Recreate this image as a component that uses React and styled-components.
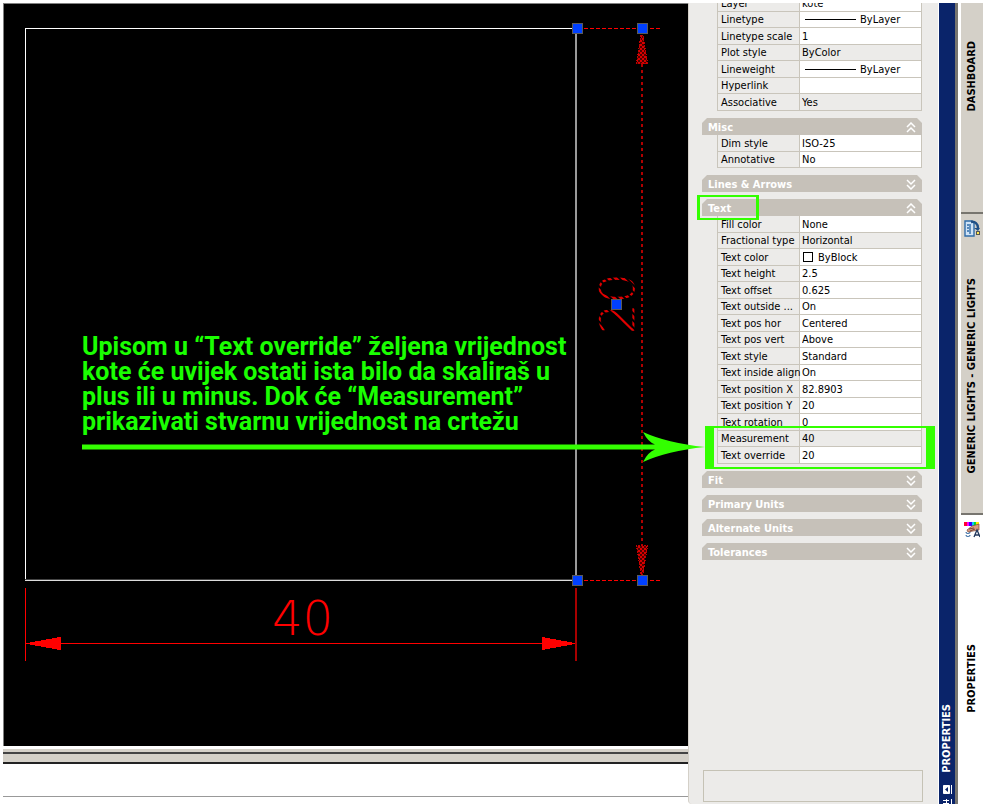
import React, { useState } from 'react';
import styled, { createGlobalStyle } from 'styled-components';

const GlobalStyle = createGlobalStyle`
  * {
    box-sizing: border-box;
  }
  body {
    margin: 0;
    background: #fff;
    color: #000;
    font-family: "DejaVu Sans Condensed", "DejaVu Sans", sans-serif;
    font-size: 11px;
  }
`;

const general = [
  { name: 'Layer', value: 'kote' },
  { name: 'Linetype', value: 'ByLayer', mark: 'line' },
  { name: 'Linetype scale', value: '1' },
  { name: 'Plot style', value: 'ByColor', locked: true },
  { name: 'Lineweight', value: 'ByLayer', mark: 'line' },
  { name: 'Hyperlink', value: '' },
  { name: 'Associative', value: 'Yes', locked: true },
];

const misc = [
  { name: 'Dim style', value: 'ISO-25' },
  { name: 'Annotative', value: 'No' },
];

const text = [
  { name: 'Fill color', value: 'None' },
  { name: 'Fractional type', value: 'Horizontal', locked: true },
  { name: 'Text color', value: 'ByBlock', mark: 'swatch' },
  { name: 'Text height', value: '2.5' },
  { name: 'Text offset', value: '0.625' },
  { name: 'Text outside ...', value: 'On' },
  { name: 'Text pos hor', value: 'Centered' },
  { name: 'Text pos vert', value: 'Above' },
  { name: 'Text style', value: 'Standard' },
  { name: 'Text inside align', value: 'On' },
  { name: 'Text position X', value: '82.8903' },
  { name: 'Text position Y', value: '20' },
  { name: 'Text rotation', value: '0' },
  { name: 'Measurement', value: '40', locked: true },
  { name: 'Text override', value: '20' },
];

const Page = styled.div`
  display: flex;
  min-height: 100vh;
  padding: 3px 1px 3px 3px;
`;

const Workspace = styled.main`
  position: relative;
  z-index: 1;
  flex: 1;
  min-width: 0;
  display: flex;
  flex-direction: column;
`;

const Canvas = styled.div`
  flex: 1;
  min-height: 0;
  overflow: hidden;
  background: #000;
  border-top: 1px solid #808080;
  border-left: 1px solid #808080;
  svg {
    display: block;
  }
`;

const Splitter = styled.div`
  height: 18px;
  background: #d4d0c8;
  border-top: 3px solid #fff;
  border-bottom: 2px solid #222;
  padding-top: 3px;
  &::before {
    content: "";
    display: block;
    height: 2px;
    background: #444;
  }
`;

const CommandLine = styled.div`
  height: 40px;
  background: #fff;
  &::before {
    content: "";
    display: block;
    height: 32px;
    border-bottom: 1px solid #999;
  }
`;

const Note = styled.p`
  position: absolute;
  left: 79px;
  top: 331px;
  margin: 0;
  color: #1aff00;
  font-family: Roboto, "Liberation Sans", sans-serif;
  font-size: 25px;
  font-weight: bold;
  line-height: 25px;
  white-space: nowrap;
`;

const NoteArrow = styled.svg`
  position: absolute;
  left: 79px;
  top: 428px;
  pointer-events: none;
`;

const Panel = styled.aside`
  width: 250px;
  display: flex;
  flex-direction: column;
  justify-content: space-between;
  overflow: hidden;
  padding: 0 16px 2px 13px;
  background: #ecebe9;
  border-left: 1px solid #d4d0c8;
  border-bottom-left-radius: 4px;
`;

const Sections = styled.div`
  display: flex;
  flex-direction: column;
  gap: 7px;
  margin-top: -8px;
`;

const SectionBox = styled.section`
  position: relative;
`;

const SectionHead = styled.button`
  display: flex;
  align-items: center;
  justify-content: space-between;
  width: 100%;
  height: 17px;
  padding: 2px 6px 0;
  border: 0;
  background: #c6c1b9;
  clip-path: polygon(0 5px, 5px 0, calc(100% - 5px) 0, 100% 5px, 100% 100%, 0 100%);
  color: #fff;
  font: inherit;
  font-weight: bold;
`;

const Grid = styled.table`
  width: calc(100% - 15px);
  margin-left: 15px;
  table-layout: fixed;
  border-spacing: 0;
  border-left: 1px solid #c9c5bb;
  tr:nth-child(odd) {
    height: 17px;
  }
  tr:nth-child(even) {
    height: 16px;
  }
`;

const NameCell = styled.th`
  width: 82px;
  padding: 0 0 0 3px;
  border-right: 1px solid #c9c5bb;
  border-bottom: 1px solid #c9c5bb;
  font-weight: normal;
  line-height: 15px;
  text-align: left;
  white-space: nowrap;
`;

const ValueCell = styled.td`
  padding: 0 0 0 2px;
  border-right: 1px solid #c9c5bb;
  border-bottom: 1px solid #c9c5bb;
  background: ${(props) => (props.$locked ? '#ecebe9' : '#fff')};
`;

const ValueBox = styled.div`
  display: flex;
  align-items: center;
  height: 15px;
`;

const ValueInput = styled.input`
  flex: 1;
  min-width: 0;
  height: 15px;
  padding: 0;
  border: 0;
  background: transparent;
  font: inherit;
  outline: 0;
`;

const LineMark = styled.span`
  width: 51px;
  height: 1px;
  margin: 0 4px 0 3px;
  background: #000;
`;

const Swatch = styled.span`
  width: 10px;
  height: 10px;
  margin: 0 5px 0 1px;
  border: 1px solid #000;
  background: #fff;
`;

const Highlight = styled.span`
  position: absolute;
  border: 2px solid #33ff00;
  pointer-events: none;
`;

const HeadHighlight = styled(Highlight)`
  left: -5px;
  top: -4px;
  width: 62px;
  height: 25px;
  border-left-width: 3px;
  border-right-width: 3px;
`;

const RowsHighlight = styled(Highlight)`
  left: 3px;
  right: -13px;
  bottom: -5px;
  height: 43px;
  border-left-width: 9px;
  border-right-width: 9px;
`;

const Description = styled.div`
  height: 32px;
  margin-left: 1px;
  margin-right: -1px;
  border: 1px solid #c5c2b5;
`;

const TitleBar = styled.div`
  width: 17px;
  display: flex;
  flex-direction: column;
  align-items: center;
  justify-content: flex-end;
  gap: 12px;
  background: #0a246a;
  border-left: 1px solid #fff;
  color: #fff;
`;

const SideText = styled.span`
  writing-mode: vertical-rl;
  transform: rotate(180deg);
  font-weight: bold;
  line-height: 14px;
  white-space: nowrap;
`;

const Divider = styled.div`
  width: 6px;
  background: #fff;
  border-left: 3px solid #77756f;
`;

const Dock = styled.nav`
  width: 22px;
  display: flex;
  flex-direction: column;
`;

const DockTab = styled.button`
  height: ${(props) => props.$height};
  flex: ${(props) => (props.$active ? '1' : 'none')};
  display: flex;
  flex-direction: column;
  align-items: center;
  justify-content: flex-start;
  padding: ${(props) => props.$pad}px 0 0;
  gap: ${(props) => props.$gap}px;
  border: 0;
  border-top: ${(props) => (props.$first ? '0' : '2px solid #77756f')};
  background: ${(props) => (props.$active ? '#fff' : '#d4d0c8')};
  color: #000;
  font: inherit;
`;

function Chevrons({ open }) {
  return (
    <svg width="10" height="11" viewBox="0 0 10 11" fill="none" stroke="#fff" strokeWidth="1.5">
      {open ? (
        <path d="M1 5 L5 1 L9 5 M1 10 L5 6 L9 10" />
      ) : (
        <path d="M1 1 L5 5 L9 1 M1 6 L5 10 L9 6" />
      )}
    </svg>
  );
}

function PropertyGrid({ rows }) {
  const [values, setValues] = useState(rows.map((row) => row.value));

  const change = (index, value) => {
    setValues(values.map((old, i) => (i === index ? value : old)));
  };

  return (
    <Grid>
      <tbody>
        {rows.map((row, index) => {
          const id = row.name.toLowerCase().replace(/[^a-z]+/g, '-');
          return (
            <tr key={row.name}>
              <NameCell scope="row">
                <label htmlFor={id}>{row.name}</label>
              </NameCell>
              <ValueCell $locked={row.locked}>
                <ValueBox>
                  {row.mark === 'line' && <LineMark />}
                  {row.mark === 'swatch' && <Swatch />}
                  <ValueInput
                    id={id}
                    value={values[index]}
                    readOnly={row.locked}
                    onChange={(e) => change(index, e.target.value)}
                  />
                </ValueBox>
              </ValueCell>
            </tr>
          );
        })}
      </tbody>
    </Grid>
  );
}

function Section({ title, rows, children }) {
  const [open, setOpen] = useState(Boolean(rows));

  return (
    <SectionBox>
      <SectionHead type="button" aria-expanded={open} onClick={() => setOpen(!open)}>
        {title}
        <Chevrons open={open} />
      </SectionHead>
      {open && rows && <PropertyGrid rows={rows} />}
      {children}
    </SectionBox>
  );
}

function Grip({ x, y }) {
  return <rect x={x - 4.5} y={y - 4.5} width="10" height="10" fill="#0040ff" stroke="#5a5a5a" />;
}

function Drawing() {
  return (
    <svg width="684" height="742" viewBox="4 4 684 742" shapeRendering="crispEdges">
      <defs>
        <pattern id="hatch" width="4" height="4" patternUnits="userSpaceOnUse">
          <rect width="4" height="4" fill="#500000" />
          <rect width="2" height="2" fill="#d80000" />
          <rect x="2" y="2" width="2" height="2" fill="#d80000" />
        </pattern>
        <pattern id="dashes" width="5" height="5" patternUnits="userSpaceOnUse" patternTransform="rotate(45)">
          <rect width="3" height="5" fill="#e00000" />
        </pattern>
      </defs>
      {/* square */}
      <path d="M576 28.5 H25.5 V580" fill="none" stroke="#fff" />
      <path d="M25 580.5 H577" stroke="#ddd" />
      <path d="M25 579.5 H577" stroke="#444" />
      <path d="M576 28 V580" stroke="#999" strokeWidth="2" />

      {/* selected vertical dimension */}
      <g stroke="#f00" fill="none">
        <path d="M584 28.5 H660 M584 580.5 H660" strokeDasharray="4 2" />
        <path d="M642 64 V545" stroke="#b00000" strokeWidth="2" strokeDasharray="3 3" />
        <path d="M641 35 L636.5 63.5 H647.5 L643 35 Z" fill="url(#hatch)" stroke="#c00000" strokeDasharray="2 1" />
        <path d="M641 574 L636.5 545.5 H647.5 L643 574 Z" fill="url(#hatch)" stroke="#c00000" strokeDasharray="2 1" />
      </g>
      <text
        transform="translate(634 334) rotate(-90)"
        fontFamily="DejaVu Sans"
        fontWeight="200"
        fontSize="48"
        fill="url(#dashes)"
      >
        20
      </text>

      {/* horizontal dimension */}
      <g stroke="#f00" fill="#f00">
        <path d="M25.5 588 V661 M26 643.5 H576" />
        <path d="M576 588 V661" stroke="#a80000" strokeWidth="2" />
        <path d="M27 643.5 L60 637.5 V649.5 Z" />
        <path d="M575 643.5 L542 637.5 V649.5 Z" />
      </g>
      <text x="272" y="635" fontFamily="DejaVu Sans" fontWeight="200" fontSize="48" fill="#f00">
        40
      </text>

      <Grip x={577} y={28} />
      <Grip x={642} y={28} />
      <Grip x={577} y={580} />
      <Grip x={642} y={580} />
      <Grip x={616} y={304} />
    </svg>
  );
}

function CopyIcon() {
  return (
    <svg width="16" height="17" viewBox="0 0 16 17">
      <path d="M1 1 H8 L10 3 V16 H1 Z" fill="#cfe3f7" stroke="#2f6ca8" strokeWidth="1.4" />
      <path d="M3 5 H5 M3 8 H5 M3 11 H5 M6 4 V14" stroke="#2f6ca8" strokeWidth="1.4" />
      <path d="M7 2 C11 1 14 4 14 8" fill="none" stroke="#1f4f86" strokeWidth="2.4" />
      <path d="M10 8 H16 L14 11 Z" fill="#1f4f86" />
      <rect x="12.5" y="11.5" width="3" height="3" fill="#ffe94a" stroke="#555" />
    </svg>
  );
}

function PaintIcon() {
  return (
    <svg width="16" height="17" viewBox="0 0 16 17">
      <rect x="0" y="1" width="3" height="4" fill="#f03" />
      <rect x="3" y="1" width="2" height="4" fill="#f0f" />
      <rect x="5" y="1" width="3" height="4" fill="#30f" />
      <rect x="8" y="1" width="2" height="4" fill="#0cf" />
      <rect x="10" y="1" width="2" height="4" fill="#0d3" />
      <rect x="12" y="1" width="3" height="4" fill="#fe0" />
      <path d="M3 9 L8 5 L15 3 V9 L9 10 L4 11 Z" fill="#d79a80" stroke="#7b4636" strokeWidth="0.7" />
      <path d="M5 8 L10 7 M6 10 L11 8" stroke="#7b4636" />
      <path d="M2 11 C2 13 6 13 6 11 M2 14 C2 16 6 16 6 14" fill="none" stroke="#3a6ea5" strokeWidth="1.2" />
      <path d="M10 16 L13 9 L16 16 M11 14 H15" fill="none" stroke="#23395d" strokeWidth="1.3" />
    </svg>
  );
}

function TitleIcons() {
  return (
    <svg width="11" height="19" viewBox="0 0 11 19" fill="none" stroke="#fff">
      <path d="M1.5 0.5 H7.5 V8.5 H1.5 Z" fill="#fff" />
      <path d="M6 2 V7 L3 4.5 Z" fill="#0a246a" stroke="none" />
      <path d="M9.5 0 V9 M9.5 14 V19 M1 15.5 H7 M1 18.5 H7 M4.5 14 V19" />
    </svg>
  );
}

function App() {
  return (
    <>
      <GlobalStyle />
      <Page>
        <Workspace>
          <Canvas>
            <Drawing />
          </Canvas>
          <Splitter />
          <CommandLine />
          <Note>
            Upisom u “Text override” željena vrijednost
            <br />
            kote će uvijek ostati ista bilo da skaliraš u
            <br />
            plus ili u minus. Dok će “Measurement”
            <br />
            prikazivati stvarnu vrijednost na crtežu
          </Note>
          <NoteArrow width="624" height="32" viewBox="0 0 624 32" fill="#33ff00">
            <path d="M0 13.5 H573 Q566 11 561 1 Q585 12 623 16 Q585 20 561 31 Q566 21 573 18.5 H0 Z" />
          </NoteArrow>
        </Workspace>
        <Panel>
          <Sections>
            <PropertyGrid rows={general} />
            <Section title="Misc" rows={misc} />
            <Section title="Lines & Arrows" />
            <Section title="Text" rows={text}>
              <HeadHighlight />
              <RowsHighlight />
            </Section>
            <Section title="Fit" />
            <Section title="Primary Units" />
            <Section title="Alternate Units" />
            <Section title="Tolerances" />
          </Sections>
          <Description />
        </Panel>
        <TitleBar>
          <SideText>PROPERTIES</SideText>
          <TitleIcons />
        </TitleBar>
        <Divider />
        <Dock>
          <DockTab type="button" $first $height="209px" $pad={38}>
            <SideText>DASHBOARD</SideText>
          </DockTab>
          <DockTab type="button" $height="301px" $pad={6} $gap={41}>
            <CopyIcon />
            <SideText>GENERIC LIGHTS - GENERIC LIGHTS</SideText>
          </DockTab>
          <DockTab type="button" $active $height="auto" $pad={6} $gap={106}>
            <PaintIcon />
            <SideText>PROPERTIES</SideText>
          </DockTab>
        </Dock>
      </Page>
    </>
  );
}

export default App;
